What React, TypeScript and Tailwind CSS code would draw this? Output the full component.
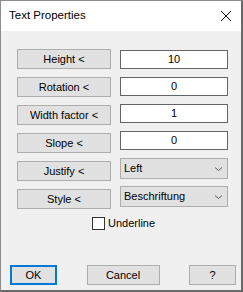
import React from "react";

const font = { fontFamily: '"Liberation Sans", Arial, sans-serif' };

const PickButton = ({ label }: { label: string }) => (
  <button className="h-[20px] w-[94px] bg-[#e1e1e1] border border-[#adadad] flex items-center justify-center text-[11px] text-black leading-none">
    {label}
  </button>
);

const ValueBox = ({ value }: { value: string }) => (
  <div className="h-[19px] w-[108px] bg-white border border-[#646464] flex items-center justify-center text-[11px] text-black leading-none">
    {value}
  </div>
);

const Combo = ({ value }: { value: string }) => (
  <div className="h-[21px] w-[108px] bg-[#e1e1e1] border border-[#adadad] flex items-center justify-between pl-[3px] pr-[4px] text-[11px] text-black leading-none">
    <span>{value}</span>
    <svg width="9" height="6" viewBox="0 0 9 6" className="mt-[1px]">
      <path d="M1 1.5 L4.5 4.5 L8 1.5" fill="none" stroke="#5a5a5a" strokeWidth="1" />
    </svg>
  </div>
);

export default function App() {
  return (
    <div
      style={font}
      className="w-[243px] h-[292px] bg-[#f0f0f0] border-t border-l border-[#8c8c8c] border-r-2 border-b-2 border-r-[#6a6a6a] border-b-[#6a6a6a] flex flex-col overflow-hidden"
    >
      <div className="h-[30px] bg-white flex items-center justify-between pl-[8px] pr-[8px] shrink-0">
        <span className="text-[11.5px] text-black">Text Properties</span>
        <svg width="12" height="12" viewBox="0 0 12 12" className="mr-[1px]">
          <path d="M1 1 L11 11 M11 1 L1 11" stroke="#111" strokeWidth="1" />
        </svg>
      </div>

      <div className="flex-1 flex flex-col">
        <div className="flex pt-[18px] pl-[16px] gap-[9px]">
          <div className="flex flex-col gap-[8px]">
            <PickButton label="Height <" />
            <PickButton label="Rotation <" />
            <PickButton label="Width factor <" />
            <PickButton label="Slope <" />
            <PickButton label="Justify <" />
            <PickButton label="Style <" />
          </div>
          <div className="flex flex-col pt-[1px]">
            <div className="flex flex-col gap-[8px]">
              <ValueBox value="10" />
              <ValueBox value="0" />
              <ValueBox value="1" />
              <ValueBox value="0" />
            </div>
            <div className="flex flex-col gap-[7px] mt-[8px]">
              <Combo value="Left" />
              <Combo value="Beschriftung" />
            </div>
          </div>
        </div>

        <div className="flex items-center mt-[8px] pl-[91px] gap-[3px]">
          <div className="w-[13px] h-[13px] bg-white border border-[#333]" />
          <span className="text-[11px] text-black leading-none">Underline</span>
        </div>

        <div className="flex justify-between mt-[35px] pl-[9px] pr-[5px]">
          <button className="h-[20px] w-[47px] bg-[#e1e1e1] border-2 border-[#0078d7] flex items-center justify-center text-[11px] text-black leading-none">
            OK
          </button>
          <button className="h-[20px] w-[73px] bg-[#e1e1e1] border border-[#adadad] flex items-center justify-center text-[11px] text-black leading-none">
            Cancel
          </button>
          <button className="h-[20px] w-[47px] bg-[#e1e1e1] border border-[#adadad] flex items-center justify-center text-[11px] text-black leading-none">
            ?
          </button>
        </div>
      </div>
    </div>
  );
}
